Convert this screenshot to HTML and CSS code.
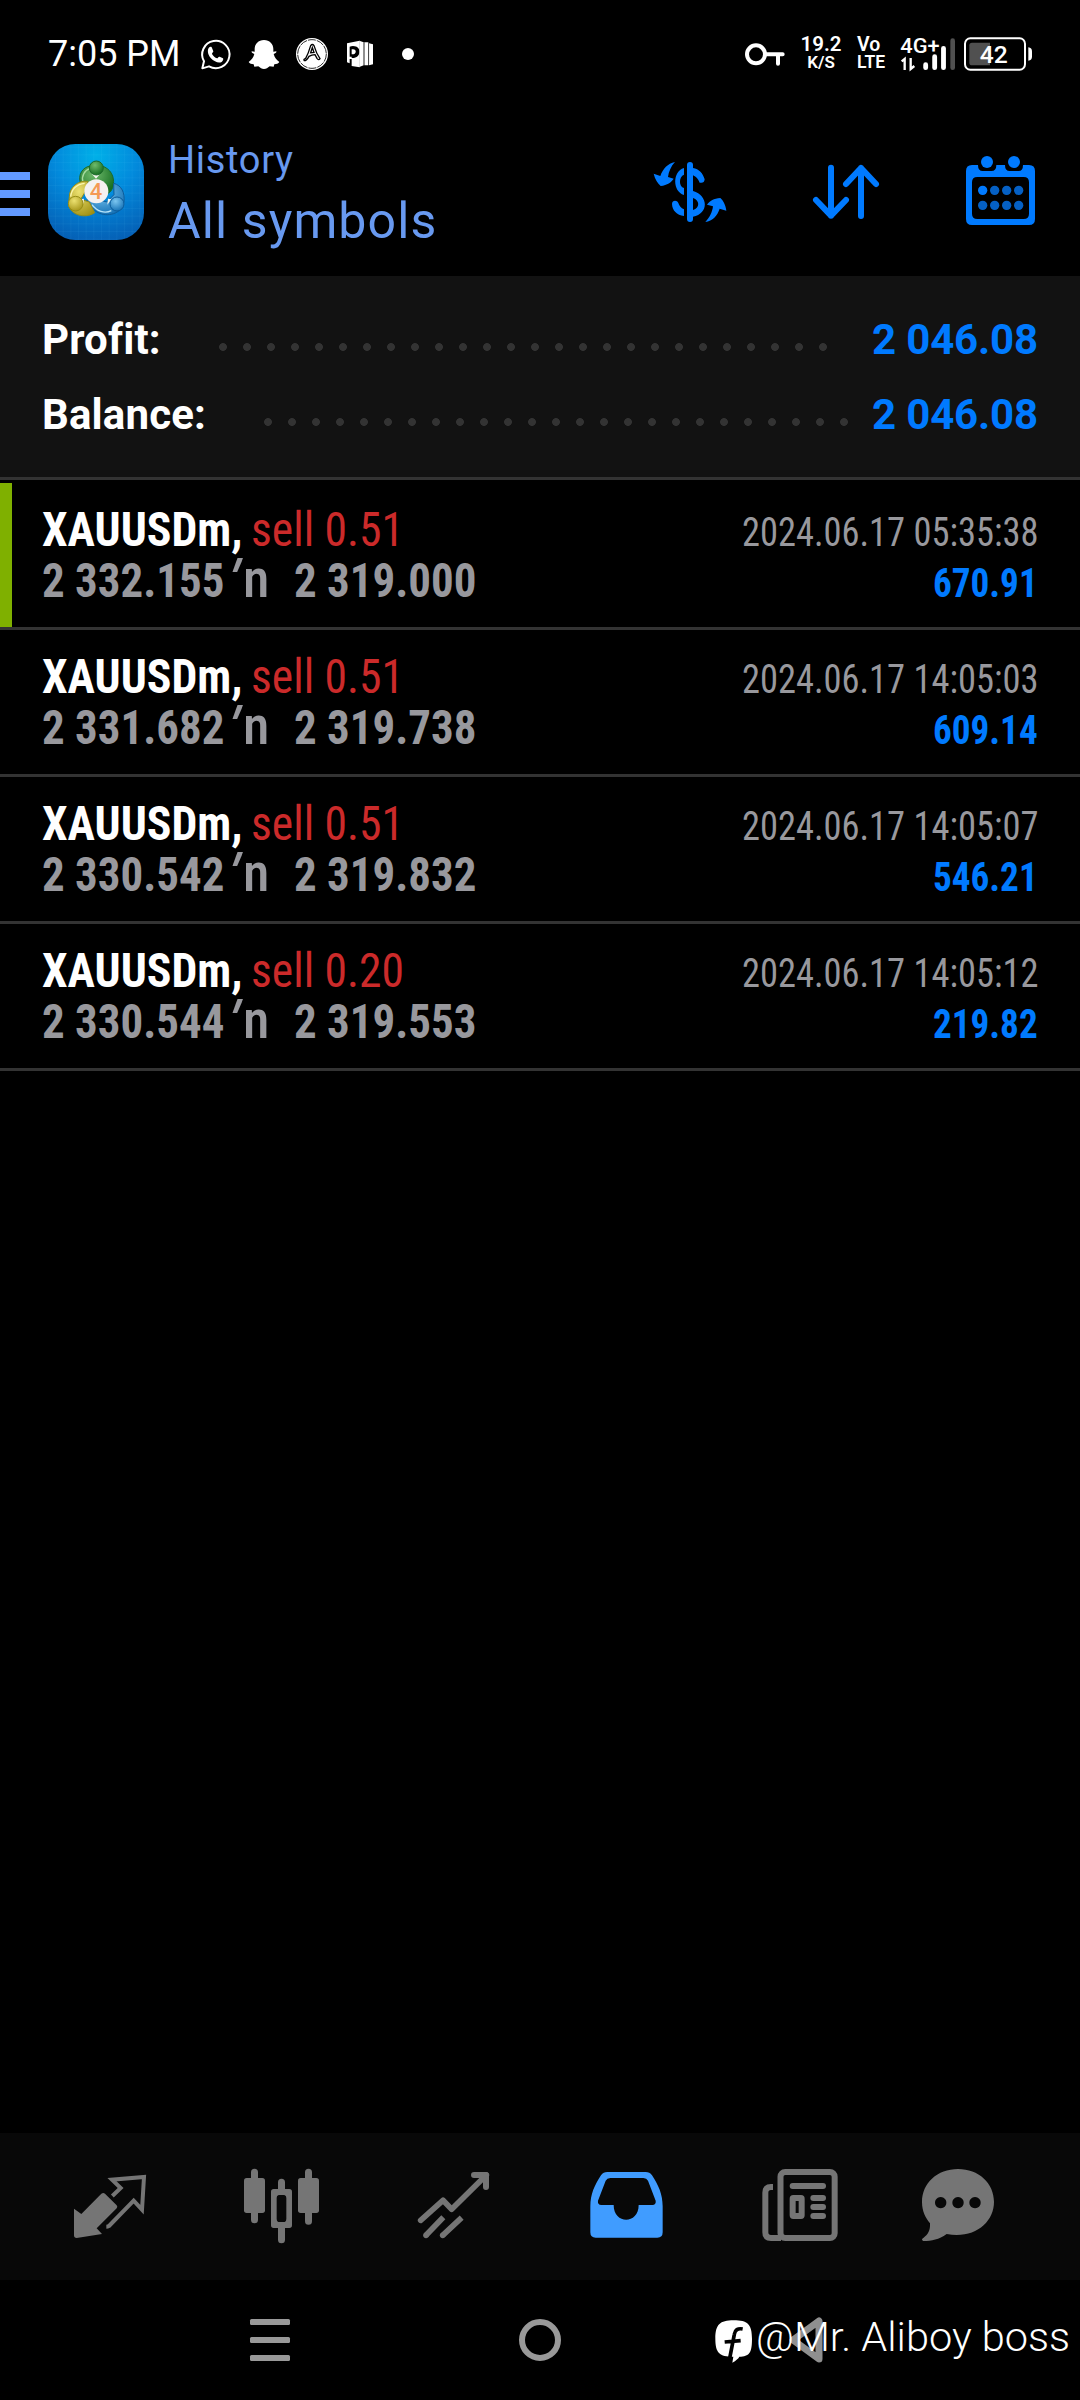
FILE: index.html
```html
<!DOCTYPE html>
<html lang="en">
<head>
<meta charset="utf-8">
<title>History</title>
<link rel="stylesheet" href="styles.css">
</head>
<body>
<div class="screen">
  <div class="status">
    <div class="clock">7:05 PM</div>
    <div class="notices">
      <svg viewBox="594 48 108 108"><path d="M607 145 L612 124 A41 41 0 1 1 627 139 Z" fill="none" stroke="#fff" stroke-width="6" stroke-linejoin="round"/><path d="M626 84c4-5 9-4 10 0l4 10c0 3-4 5-4 8 4 7 9 11 15 13 3 0 4-6 8-5l10 5c2 3 0 8-4 11-6 3-13 2-20-2-9-5-17-13-20-22-2-7-2-13 1-18z" fill="#fff"/></svg>
      <svg viewBox="738 48 108 108"><path d="M792 60c17 0 28 12 28 27v8l9-1c1 4-3 6-8 8 3 11 8 17 17 24-3 5-8 6-15 7l-2 7-12-1c-6 5-10 8-17 8s-11-3-17-8l-12 1-2-7c-7-1-12-2-15-7 9-7 14-13 17-24-5-2-9-4-8-8l9 1v-8c0-15 11-27 28-27z" fill="#fff"/></svg>
      <svg viewBox="882 48 108 108"><circle cx="936" cy="102" r="48" fill="#fff"/><circle cx="936" cy="102" r="43" fill="none" stroke="#000" stroke-width="2.5" stroke-dasharray="24 3"/><path d="M913 122q-4-4 4-7 8-14 15-38 5-7 10 0 7 24 18 39-4 6-9-1l-6-11q-10 0-18 5-7 13-14 13zM932 98l5-15 5 14z" fill="none" stroke="#000" stroke-width="4"/></svg>
      <svg viewBox="1026 48 108 108"><path d="M1041 70l38-8v80l-24-4v-21h-6v13l-8-3zM1049 80v30h6v-22c16-4 17 16 0 15v11c30 2 32-36 4-36-4 0-7 1-10 2z" fill="#fff" fill-rule="evenodd"/><path d="M1078 62l13 5v69l-13 5zM1093 67h12v69h-12zM1107 70l12 3v60l-12 3z" fill="#fff"/><path d="M1092 68v68M1106 70v64" stroke="#444" stroke-width="1.500"/></svg>
      <svg viewBox="1170 48 108 108"><circle cx="1224" cy="102" r="18" fill="#fff"/></svg>
    </div>
    <svg class="key" viewBox="75 48 120 108"><circle cx="108" cy="103" r="27" fill="none" stroke="#fff" stroke-width="12"/><path d="M136 103h52M174 103v28" stroke="#fff" stroke-width="12" stroke-linecap="round"/></svg>
    <div class="pair speed"><span>19.2</span><span>K/S</span></div>
    <div class="pair volte"><span>Vo</span><span>LTE</span></div>
    <svg class="signal" viewBox="540 48 168 108"><text x="541" y="100" font-size="63" font-weight="500" textLength="118" lengthAdjust="spacingAndGlyphs" fill="#fff">4G+</text><path d="M545 124l9-7v33M572 114v33l11-9" fill="none" stroke="#fff" stroke-width="7"/><path d="M617 134v9M644 110v33M670.500 85v58" stroke="#fff" stroke-width="14.500" stroke-linecap="round"/><path d="M698 62v81" stroke="#505050" stroke-width="14" stroke-linecap="round"/></svg>
    <svg class="battery" viewBox="729 48 210 108"><rect x="735" y="55" width="180" height="94" rx="16" fill="none" stroke="#fff" stroke-width="6"/><path d="M756 68h54v68h-54q-8 0-8-8v-52q0-8 8-8z" fill="#505050"/><path d="M925 82q11 2 11 12v16q0 10-11 12z" fill="#fff"/><text x="779" y="129" font-size="72" font-weight="500" textLength="84" lengthAdjust="spacingAndGlyphs" fill="#fff">42</text></svg>
  </div>

  <header class="header">
    <div class="menu"><i></i><i></i><i></i></div>
    <svg class="logo" viewBox="144 72 288 288">
      <defs>
        <radialGradient id="bg" cx=".5" cy=".12" r=".95"><stop offset="0" stop-color="#00b0e8"/><stop offset=".45" stop-color="#028adc"/><stop offset="1" stop-color="#055cb2"/></radialGradient>
        <radialGradient id="gr" cx=".4" cy=".3" r=".7"><stop offset="0" stop-color="#6fbb6c"/><stop offset="1" stop-color="#176f22"/></radialGradient>
        <radialGradient id="ye" cx=".4" cy=".3" r=".8"><stop offset="0" stop-color="#ece170"/><stop offset="1" stop-color="#a08f12"/></radialGradient>
        <radialGradient id="bl" cx=".4" cy=".3" r=".8"><stop offset="0" stop-color="#7cc6f0"/><stop offset="1" stop-color="#0a69b0"/></radialGradient>
        <pattern id="grid" x="165" y="80" width="23" height="23" patternUnits="userSpaceOnUse"><path d="M0 0H23M0 0V23" stroke="#6fd0ff" stroke-opacity=".16" stroke-width="2"/></pattern>
      </defs>
      <rect x="144" y="72" width="288" height="288" rx="82" fill="url(#bg)"/>
      <rect x="144" y="72" width="288" height="288" rx="82" fill="url(#grid)"/>
      <path d="M242 190c-10-24 6-50 30-52h34c26 8 38 32 34 56-2 16-10 24-22 30l-14-36z" fill="url(#gr)" stroke="#1c6a2b" stroke-width="3"/>
      <path d="M249 186c-6-18 6-36 20-40" fill="none" stroke="#a5dba0" stroke-width="4"/>
      <path d="M341 190c24 6 34 28 31 56l-12 24c-22 20-64 20-84-8l-16-22 20-6 40 12 22-22z" fill="url(#bl)" stroke="#0c5c9b" stroke-width="3"/>
      <path d="M276 254c14 20 38 28 58 18" fill="none" stroke="#b6e4fa" stroke-width="4"/>
      <path d="M264 184c-30-4-56 18-56 46l-2 26c6 28 48 42 78 22l-16-32-26-8 12-20z" fill="url(#ye)" stroke="#978d16" stroke-width="3"/>
      <path d="M212 230c2-22 18-38 42-40" fill="none" stroke="#fbf6b0" stroke-width="4"/>
      <path d="M288 176l-12-14h24zM252 236l-14 2 12 14zM324 236l-2 18 12-16z" fill="#f4f6ee"/>
      <circle cx="289" cy="144" r="21" fill="url(#gr)" stroke="#1c6a2b" stroke-width="3"/>
      <circle cx="227" cy="251" r="22" fill="url(#ye)" stroke="#978d16" stroke-width="3"/>
      <circle cx="351" cy="252" r="21" fill="url(#bl)" stroke="#0c5c9b" stroke-width="3"/>
      <circle cx="289" cy="214" r="36" fill="#f4f1f0"/>
      <text x="288" y="237" text-anchor="middle" font-size="66" font-weight="500" fill="#f49a55">4</text>
    </svg>
    <div class="titles"><div class="t1">History</div><div class="t2">All symbols</div></div>
    <svg class="act a1" viewBox="90 60 240 240" fill="#007aff"><path d="M210 105v162" stroke="#007aff" stroke-width="18" stroke-linecap="round"/><path d="M192 114v20c-16 6-16 36 0 40v21c-34-10-36-70 0-81zM219 114c18 3 30 16 35 34q-1 13-15 10c-5-11-10-18-20-22zM219 183c47 14 48 68 0 77v-20c22-6 20-30 0-36zM156 222c0-12 15-13 19-3 3 9 8 15 17 19v20c-22-3-35-16-36-36z"/><path d="M165 96c-12 12-19 30-21 45l17 5c-7 11-19 19-39 22-9-8-17-20-21-37l20 7c8-22 22-37 44-42zM256 276c12-12 21-30 23-47l-18-5c9-12 20-18 40-20 8 7 16 20 18 38l-20-6c-7 22-21 36-43 40z"/></svg>
    <svg class="act a2" viewBox="558 60 240 240" fill="none" stroke="#007aff" stroke-width="18" stroke-linecap="round" stroke-linejoin="round"><path d="M633 113v144M588 210l45 47 45-47M723 258V114M678 162l45-48 45 48"/></svg>
    <svg class="act a3" viewBox="1020 60 240 240" fill="#007aff"><path fill-rule="evenodd" d="M1056 105h18q0 18 14 18h26q15 0 15-18h26q0 18 14 18h27q13 0 13-18h18q18 0 18 18v144q0 18-18 18h-171q-18 0-18-18v-144q0-18 18-18zM1072 141q-16 0-16 16v94q0 16 16 16h139q16 0 16-16v-94q0-16-16-16z"/><circle cx="1101" cy="96" r="18"/><circle cx="1182" cy="96" r="18"/><circle cx="1088" cy="181" r="14"/><g fill="#0560c4"><circle cx="1124" cy="181" r="14"/><circle cx="1160" cy="181" r="14"/><circle cx="1196" cy="181" r="14"/><circle cx="1088" cy="226" r="14"/><circle cx="1124" cy="226" r="14"/><circle cx="1160" cy="226" r="14"/><circle cx="1196" cy="226" r="14"/></g></svg>
  </header>

  <section class="summary">
    <div class="sum profit"><b>Profit:</b><i></i><strong>2 046.08</strong></div>
    <div class="sum balance"><b>Balance:</b><i></i><strong>2 046.08</strong></div>
  </section>

  <main class="deals">
    <article class="deal selected">
      <div class="line"><b>XAUUSDm,</b><span class="side">sell 0.51</span><time>2024.06.17 05:35:38</time></div>
      <div class="line"><span class="price">2 332.155</span><span class="to"><i>'</i>n</span><span class="price">2 319.000</span><span class="gain">670.91</span></div>
    </article>
    <article class="deal">
      <div class="line"><b>XAUUSDm,</b><span class="side">sell 0.51</span><time>2024.06.17 14:05:03</time></div>
      <div class="line"><span class="price">2 331.682</span><span class="to"><i>'</i>n</span><span class="price">2 319.738</span><span class="gain">609.14</span></div>
    </article>
    <article class="deal">
      <div class="line"><b>XAUUSDm,</b><span class="side">sell 0.51</span><time>2024.06.17 14:05:07</time></div>
      <div class="line"><span class="price">2 330.542</span><span class="to"><i>'</i>n</span><span class="price">2 319.832</span><span class="gain">546.21</span></div>
    </article>
    <article class="deal">
      <div class="line"><b>XAUUSDm,</b><span class="side">sell 0.20</span><time>2024.06.17 14:05:12</time></div>
      <div class="line"><span class="price">2 330.544</span><span class="to"><i>'</i>n</span><span class="price">2 319.553</span><span class="gain">219.82</span></div>
    </article>
  </main>

  <nav class="tabs">
    <svg viewBox="90 111 240 240"><path d="M102 236l22 16 60-61q6-4 11 0l35 35q4 5 0 9l-60 60 16 17-76 12q-8 0-8-8z" fill="#757575"/><path d="M217 198l25-24-26-25 96-8-6 98-25-27-74 76q-4 2-8 2" fill="none" stroke="#757575" stroke-width="12"/></svg>
    <svg viewBox="606 111 240 240" fill="#757575"><rect x="612" y="144" width="63" height="105" rx="8"/><rect x="774" y="144" width="63" height="105" rx="8"/><path d="M643.500 127v142M805.500 127v147M724.500 157v25M724.500 290v39" stroke="#757575" stroke-width="21" stroke-linecap="round"/><path fill-rule="evenodd" d="M701 177h47q8 0 8 8v101q0 8-8 8h-47q-8 0-8-8v-101q0-8 8-8zM720 195q-10 0-10 10v61q0 10 10 10h9q10 0 10-10v-61q0-10-10-10z"/><rect x="711" y="196" width="27" height="80" rx="8" fill="#080808"/></svg>
    <svg viewBox="1122 111 240 240" fill="none" stroke="#757575" stroke-width="17"><path d="M1142 271l67-60 26 27 104-103" stroke-linecap="round" stroke-linejoin="round"/><path d="M1302 135h36v36" stroke-width="18" stroke-linecap="round" stroke-linejoin="round"/><path d="M1158 316l52-54M1208 316l57-53"/><g fill="#757575" stroke="none"><circle cx="1158" cy="316" r="8.500"/><circle cx="1208" cy="316" r="8.500"/></g></svg>
    <svg viewBox="138 111 240 240"><path fill="#409cff" fill-rule="evenodd" d="M202 126h115q12 0 19 10c20 31 32 57 32 93v78q0 16-16 16h-185q-16 0-16-16v-78c0-36 12-62 32-93q7-10 19-10zM211 144q-10 0-14 8l-23 60q-2 12 10 13h37c0 59 75 59 75 0h41q12-1 10-13l-23-60q-4-8-14-8z"/></svg>
    <svg viewBox="654 111 240 240" fill="none" stroke="#757575" stroke-width="18"><rect x="721.500" y="126" width="162.500" height="198" rx="14"/><path d="M699 171h-6q-17 0-17 17v119q0 17 17 17h30"/><path d="M758 168h91" stroke-linecap="round"/><path d="M820 204h29M820 231h29M820 258h29" stroke-linecap="round"/><rect x="758" y="204" width="27" height="54" rx="2"/></svg>
    <svg viewBox="1134 111 240 240"><path fill="#757575" fill-rule="evenodd" d="M1254 117c62 0 108 42 108 99 0 62-60 112-142 96-24 17-44 21-70 21q-8-4 0-9c14-11 21-21 20-44-13-16-24-36-24-64 0-57 46-99 108-99zM1202 201a17 17 0 1 0 .1 0zM1254 201a17 17 0 1 0 .1 0zM1305 201a17 17 0 1 0 .1 0z"/></svg>
  </nav>

  <div class="system">
    <svg viewBox="0 0 48 48" fill="#999"><rect x="4" y="3" width="40" height="6" rx="1.500"/><rect x="4" y="21" width="40" height="6" rx="1.500"/><rect x="4" y="39" width="40" height="6" rx="1.500"/></svg>
    <svg viewBox="0 0 48 48"><circle cx="24" cy="24" r="18" fill="none" stroke="#999" stroke-width="6"/></svg>
    <svg viewBox="0 0 48 48"><path d="M33 5v38L7 24z" fill="none" stroke="#8f8f8f" stroke-width="7" stroke-linejoin="round"/></svg>
  </div>
  <div class="watermark">
    <svg viewBox="105 117 114 132"><path d="M161 121c42 0 55 12 55 55s-8 53-38 54q-4 8-21 18l3-18c-42 0-54-12-54-54s13-55 55-55z" fill="#fff"/><path d="M188 147q-22-4-25 16l-14 72M134 186l48-4" fill="none" stroke="#000" stroke-width="11"/></svg>
    <span>@Mr. Aliboy boss</span>
  </div>
</div>
</body>
</html>
```
FILE: styles.css
```css
* { box-sizing: border-box; }
body { margin: 0; background: #000; font-family: Roboto, sans-serif; }
svg { display: block; flex: none; font-family: Roboto, sans-serif; overflow: visible; }
.screen { position: relative; width: 1080px; height: 2400px; background: #000; display: flex; flex-direction: column; overflow: hidden; }

.status { height: 108px; display: flex; padding: 36px 0 0 48px; color: #fff; }
.clock { width: 150px; font-size: 36px; line-height: 36px; white-space: nowrap; }
.notices { display: flex; gap: 12px; width: 547px; }
.notices svg { width: 36px; height: 36px; }
.key { width: 40px; height: 36px; }
.pair { display: flex; flex-direction: column; font-weight: 600; }
.speed { width: 72px; align-items: center; font-size: 20.5px; line-height: 17px; }
.speed span + span { font-size: 17px; line-height: 19px; }
.volte { width: 43px; font-size: 19.5px; line-height: 17px; }
.volte span + span { font-size: 17.5px; line-height: 19px; }
.signal { width: 56px; height: 36px; }
.battery { width: 70px; height: 36px; margin-left: 7px; }

.header { height: 168px; display: flex; align-items: flex-start; padding-top: 36px; }
.menu { width: 30px; display: flex; flex-direction: column; gap: 10px; padding-top: 28px; margin-right: 18px; }
.menu i { height: 8px; background: #6299ff; }
.logo { width: 96px; height: 96px; margin-right: 24px; }
.titles { width: 482px; color: #6899f0; white-space: nowrap; }
.t1 { font-size: 38px; line-height: 33px; letter-spacing: .7px; }
.t2 { font-size: 50px; line-height: 88px; letter-spacing: 1.1px; }
.act { width: 80px; height: 80px; margin-top: 6px; }
.a2 { margin-left: 76px; }
.a3 { margin-left: 74px; }

.summary { height: 204px; background: #121212; border-bottom: 3px solid #333; padding: 26px 42px 0 42px; }
.sum { height: 75px; line-height: 75px; font-size: 42px; display: flex; color: #fff; white-space: nowrap; }
.sum b { font-weight: 700; letter-spacing: .15px; }
.sum strong { color: #007aff; font-weight: 700; margin-left: auto; letter-spacing: -.15px; }
.sum i { height: 8px; margin-top: 41px; background: radial-gradient(circle at 12px 4px, #333 3.500px, transparent 4.300px) 0 0 / 24px 8px; }
.profit b { width: 169px; }
.profit i { width: 624px; }
.balance b { width: 214px; }
.balance i { width: 600px; }

.deals { flex: 1; padding-top: 3px; }
.deal { height: 147px; border-bottom: 3px solid #333; padding: 21px 42px 0 42px; font-stretch: 75%; }
.selected { background: linear-gradient(#7fb000, #7fb000) 0 0 / 12px 100% no-repeat; }
.line { display: flex; align-items: baseline; height: 51px; line-height: 51px; font-size: 48px; white-space: nowrap; }
.line b, .side, .price { transform-origin: 0 50%; flex: none; }
.line b { width: 209px; color: #fff; transform: scaleX(.953); }
.side { color: #cb2a2a; transform: scaleX(.95); }
.price { color: #98989d; font-weight: 700; width: 192px; transform: scaleX(.936); }
.to { color: #98989d; font-weight: 500; width: 60px; font-size: 54px; line-height: 47px; }
.to i { display: inline-block; width: 9px; font-size: 52px; font-style: normal; font-weight: 700; transform: skewX(-20deg) translateX(-6px); }
.line time, .gain { margin-left: auto; font-size: 40px; transform-origin: 100% 50%; }
.line time { color: #98989d; transform: scaleX(.911); }
.gain { color: #007aff; font-weight: 700; transform: scaleX(.93); }

.tabs { height: 147px; background: #080808; display: flex; gap: 92px; padding: 34px 0 0 70px; }
.tabs svg { width: 80px; height: 80px; }
.tabs svg:last-child { margin-left: -12px; }

.system { height: 120px; display: flex; align-items: center; gap: 222px; padding-left: 246px; }
.system svg { width: 48px; height: 48px; }
.watermark { position: absolute; left: 715px; top: 2319px; display: flex; color: #fff; gap: 3px; }
.watermark svg { width: 38px; height: 44px; }
.watermark span { font-size: 41.5px; line-height: 36px; font-weight: 350; white-space: nowrap; }
```
